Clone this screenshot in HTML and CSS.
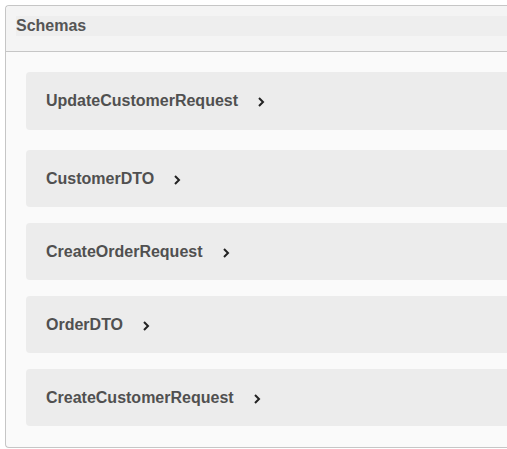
FILE: index.html
```html
<!DOCTYPE html>
<html>
<head>
<meta charset="utf-8">
<link rel="stylesheet" href="styles.css">
</head>
<body>
<section class="panel">
  <header class="panel-head">
    <div class="panel-title">Schemas</div>
  </header>
  <div class="panel-body">
    <div class="model"><span class="model-name">UpdateCustomerRequest</span><svg class="chev" viewBox="0 0 8 12" width="8" height="12"><path d="M2 2l4 4-4 4" fill="none" stroke="#222" stroke-width="2"/></svg></div>
    <div class="model"><span class="model-name">CustomerDTO</span><svg class="chev" viewBox="0 0 8 12" width="8" height="12"><path d="M2 2l4 4-4 4" fill="none" stroke="#222" stroke-width="2"/></svg></div>
    <div class="model"><span class="model-name">CreateOrderRequest</span><svg class="chev" viewBox="0 0 8 12" width="8" height="12"><path d="M2 2l4 4-4 4" fill="none" stroke="#222" stroke-width="2"/></svg></div>
    <div class="model"><span class="model-name">OrderDTO</span><svg class="chev" viewBox="0 0 8 12" width="8" height="12"><path d="M2 2l4 4-4 4" fill="none" stroke="#222" stroke-width="2"/></svg></div>
    <div class="model"><span class="model-name">CreateCustomerRequest</span><svg class="chev" viewBox="0 0 8 12" width="8" height="12"><path d="M2 2l4 4-4 4" fill="none" stroke="#222" stroke-width="2"/></svg></div>
  </div>
</section>
</body>
</html>
```

FILE: styles.css
```css
html, body {
  margin: 0;
  background: #fff;
  overflow: hidden;
}
body {
  padding: 5px 0 0 5px;
  font-family: "Liberation Sans", Arial, sans-serif;
}
.panel {
  width: 502px;
  height: 443px;
  box-sizing: border-box;
  border: 1px solid #c6c6c6;
  border-right: 0;
  border-radius: 4px 0 0 4px;
  background: #fafafa;
  display: flex;
  flex-direction: column;
}
.panel-head {
  height: 46px;
  box-sizing: border-box;
  background: #f4f4f4;
  border-bottom: 1px solid #c6c6c6;
  border-radius: 4px 0 0 0;
  padding: 10px 0 0 10px;
}
.panel-title {
  height: 20px;
  background: #eeeeee;
  font-size: 16px;
  font-weight: bold;
  color: #555;
  line-height: 20px;
  padding-left: 0;
}
.panel-body {
  padding: 20px 0 0 20px;
  display: flex;
  flex-direction: column;
  gap: 16px;
}
.model {
  height: 57px;
  background: #ececec;
  border-radius: 4px 0 0 4px;
  display: flex;
  align-items: center;
  padding-left: 20px;
  gap: 19px;
}
.model:first-child {
  height: 58px;
  margin-bottom: 4px;
}
.model-name {
  font-size: 16px;
  font-weight: bold;
  color: #505050;
}
.chev {
  display: block;
  margin-top: 2px;
}
```
